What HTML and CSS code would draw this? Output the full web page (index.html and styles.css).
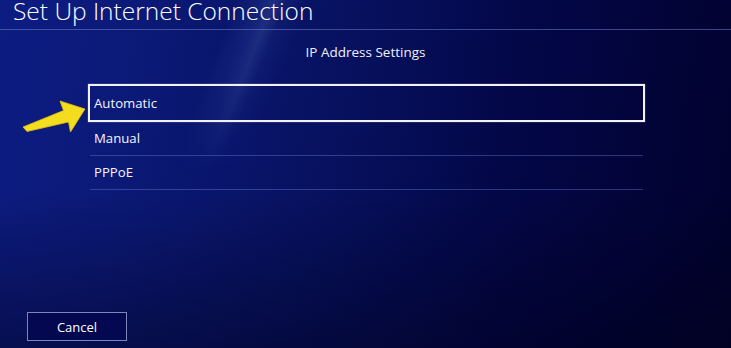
FILE: index.html
```html
<!DOCTYPE html>
<html>
<head>
<meta charset="utf-8">
<link rel="stylesheet" href="styles.css">
</head>
<body>
<div class="screen">
  <div class="streak"></div>
  <header class="header">
    <h1 class="title">Set Up Internet Connection</h1>
  </header>
  <main class="content">
    <div class="subtitle">IP Address Settings</div>
    <ul class="menu">
      <li class="item selected">Automatic</li>
      <li class="item">Manual</li>
      <li class="item">PPPoE</li>
    </ul>
  </main>
  <footer class="footer">
    <button class="cancel">Cancel</button>
  </footer>
  <svg class="arrow" width="731" height="348" viewBox="0 0 731 348">
    <polygon points="23,127 63.5,110.5 60,101 85,109 70.5,132 68.5,122 27,131.5" fill="#f4dc1e" stroke="#d9bf10" stroke-width="0.8" stroke-linejoin="round"/>
  </svg>
</div>
</body>
</html>
```
FILE: styles.css
```css
html, body {
  margin: 0;
  padding: 0;
  width: 731px;
  height: 348px;
  overflow: hidden;
  background: #020330;
}
.screen {
  position: relative;
  width: 731px;
  height: 348px;
  display: flex;
  flex-direction: column;
  overflow: hidden;
  font-family: "Open Sans", "Liberation Sans", sans-serif;
  color: #fff;
  background:
    linear-gradient(180deg, rgba(0,0,20,0) 0%, rgba(0,0,20,0) 55%, rgba(0,0,25,0.45) 100%),
    linear-gradient(100deg, #0d1c82 0%, #0b1976 20%, #07115f 45%, #030645 70%, #01022c 100%);
}
.streak {
  position: absolute;
  left: 0;
  top: 0;
  width: 731px;
  height: 348px;
  pointer-events: none;
  background: linear-gradient(112deg, rgba(255,255,255,0) 0%, rgba(255,255,255,0) 27%, rgba(120,160,255,0.10) 30%, rgba(150,190,255,0.16) 31.5%, rgba(120,160,255,0.06) 33%, rgba(255,255,255,0) 36%);
  -webkit-mask-image: linear-gradient(180deg, #000 0%, rgba(0,0,0,0.7) 25%, rgba(0,0,0,0) 50%);
  mask-image: linear-gradient(180deg, #000 0%, rgba(0,0,0,0.7) 25%, rgba(0,0,0,0) 50%);
}
.header {
  position: relative;
  height: 29px;
  border-bottom: 1px solid rgba(130,150,220,0.45);
  padding-left: 13px;
}
.title {
  margin: 0;
  font-size: 24.5px;
  font-weight: 300;
  line-height: 21px;
  letter-spacing: 0;
  white-space: nowrap;
}
.content {
  position: relative;
  display: flex;
  flex-direction: column;
  padding: 0 86px 0 88px;
}
.subtitle {
  text-align: center;
  font-size: 13.5px;
  line-height: 20px;
  margin-top: 12px;
  margin-left: -88px;
  margin-right: -86px;
  color: #eef0ff;
}
.menu {
  list-style: none;
  margin: 22px 0 0 0;
  padding: 0;
}
.item {
  height: 33px;
  line-height: 33px;
  font-size: 13.2px;
  padding-left: 4px;
  margin: 0 2px;
  border-bottom: 1px solid rgba(110,130,210,0.4);
  color: #f4f5ff;
}
.item.selected {
  margin: 0;
  height: 34px;
  line-height: 34px;
  border: 2px solid #f2f2f6;
  padding-left: 4px;
  box-shadow: 0 0 1px rgba(255,255,255,0.6);
}
.footer {
  position: relative;
  margin-top: auto;
  padding: 0 0 7px 27px;
}
.cancel {
  width: 100px;
  height: 29px;
  background: #040850;
  border: 1px solid #7d86b4;
  color: #fff;
  font-family: "Open Sans", "Liberation Sans", sans-serif;
  font-size: 13px;
  padding: 0;
  cursor: pointer;
}
.arrow {
  position: absolute;
  left: 0;
  top: 0;
  pointer-events: none;
}
```
